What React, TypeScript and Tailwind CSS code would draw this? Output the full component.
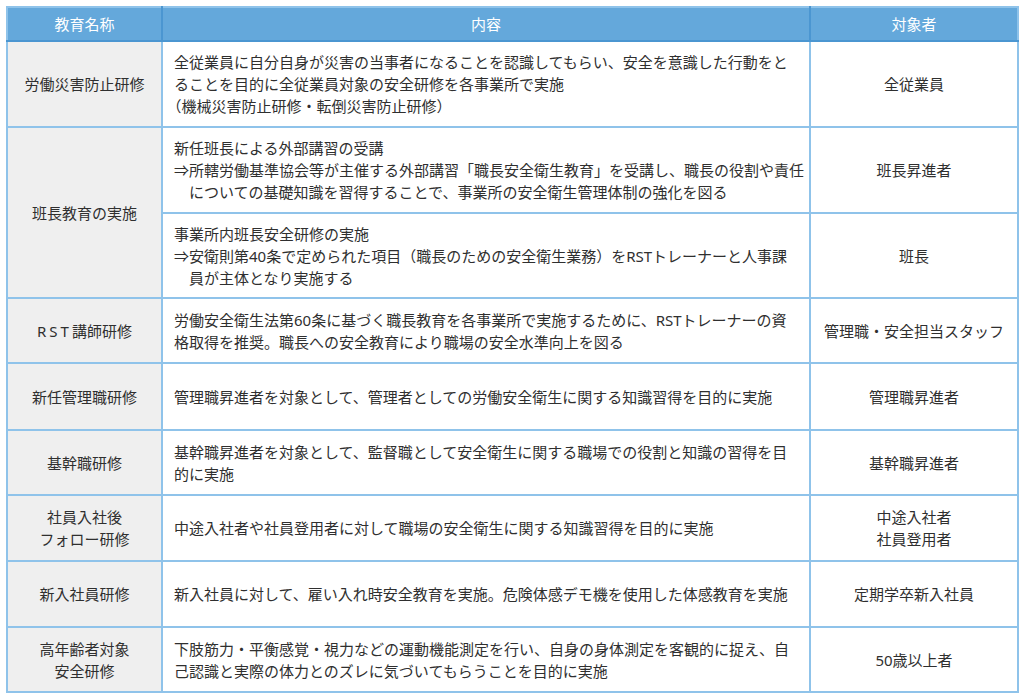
import React from "react";

const rows = [
  {
    name: ["労働災害防止研修"],
    content: [
      ["全従業員に自分自身が災害の当事者になることを認識してもらい、安全を意識した行動をと", "ることを目的に全従業員対象の安全研修を各事業所で実施"],
    ],
    target: ["全従業員"],
    h: "h-[86px]",
  },
  {
    name: ["RST講師研修"],
    content: [["労働安全衛生法第60条に基づく職長教育を各事業所で実施するために、RSTトレーナーの資", "格取得を推奨。職長への安全教育により職場の安全水準向上を図る"]],
    target: ["管理職・安全担当スタッフ"],
    h: "h-[65px]",
    spaced: true,
  },
  {
    name: ["新任管理職研修"],
    content: [["管理職昇進者を対象として、管理者としての労働安全衛生に関する知識習得を目的に実施"]],
    target: ["管理職昇進者"],
    h: "h-[67px]",
  },
  {
    name: ["基幹職研修"],
    content: [["基幹職昇進者を対象として、監督職として安全衛生に関する職場での役割と知識の習得を目", "的に実施"]],
    target: ["基幹職昇進者"],
    h: "h-[65px]",
  },
  {
    name: ["社員入社後", "フォロー研修"],
    content: [["中途入社者や社員登用者に対して職場の安全衛生に関する知識習得を目的に実施"]],
    target: ["中途入社者", "社員登用者"],
    h: "h-[66px]",
  },
  {
    name: ["新入社員研修"],
    content: [["新入社員に対して、雇い入れ時安全教育を実施。危険体感デモ機を使用した体感教育を実施"]],
    target: ["定期学卒新入社員"],
    h: "h-[66px]",
  },
  {
    name: ["高年齢者対象", "安全研修"],
    content: [["下肢筋力・平衡感覚・視力などの運動機能測定を行い、自身の身体測定を客観的に捉え、自", "己認識と実際の体力とのズレに気づいてもらうことを目的に実施"]],
    target: ["50歳以上者"],
    h: "h-[65px]",
  },
];

const cell = "border-2 border-[#8fc3ea] align-middle";
const nameCell = `${cell} bg-[#efefef] text-center`;
const contentCell = `${cell} bg-white text-left pl-[11px] pr-1`;
const targetCell = `${cell} bg-white text-center`;

const Lines = ({ lines }: { lines: string[] }) => (
  <>
    {lines.map((l, i) => (
      <div key={i} className="whitespace-nowrap">
        {l}
      </div>
    ))}
  </>
);

export default function App() {
  return (
    <div
      className="bg-white w-[1023px] h-[697px] pt-[6px] pl-[6px] text-[#2f2f2f] text-[15px] leading-[22px]"
      style={{ fontFamily: '"Noto Sans", "Noto Sans CJK JP", sans-serif' }}
    >
      <table className="border-collapse w-[1011px] table-fixed">
        <colgroup>
          <col className="w-[155px]" />
          <col className="w-[648px]" />
          <col className="w-[208px]" />
        </colgroup>
        <thead>
          <tr className="h-[34px] bg-[#64a8db] text-white">
            <th className="border-2 border-[#8fc3ea] border-r-[#4b96d1] border-b-[#4b96d1] font-normal text-[15px]">教育名称</th>
            <th className="border-2 border-[#8fc3ea] border-x-[#4b96d1] border-b-[#4b96d1] font-normal text-[15px]">内容</th>
            <th className="border-2 border-[#8fc3ea] border-l-[#4b96d1] border-b-[#4b96d1] font-normal text-[15px]">対象者</th>
          </tr>
        </thead>
        <tbody>
          <tr className={rows[0].h}>
            <td className={nameCell}><Lines lines={rows[0].name} /></td>
            <td className={contentCell}>
              <Lines lines={rows[0].content[0]} />
              <div className="whitespace-nowrap">
                <span className="[font-feature-settings:'halt']">（</span>機械災害防止研修・転倒災害防止研修）
              </div>
            </td>
            <td className={targetCell}><Lines lines={rows[0].target} /></td>
          </tr>
          <tr className="h-[86px]">
            <td rowSpan={2} className={nameCell}>班長教育の実施</td>
            <td className={contentCell}>
              <div>新任班長による外部講習の受講</div>
              <div className="pl-[1em] -indent-[1em] whitespace-nowrap">
                ⇒所轄労働基準協会等が主催する外部講習「職長安全衛生教育」を受講し、職長の役割や責任
                <br />
                についての基礎知識を習得することで、事業所の安全衛生管理体制の強化を図る
              </div>
            </td>
            <td className={targetCell}>班長昇進者</td>
          </tr>
          <tr className="h-[85px]">
            <td className={contentCell}>
              <div>事業所内班長安全研修の実施</div>
              <div className="pl-[1em] -indent-[1em] whitespace-nowrap">
                ⇒安衛則第40条で定められた項目（職長のための安全衛生業務）をRSTトレーナーと人事課
                <br />
                員が主体となり実施する
              </div>
            </td>
            <td className={targetCell}>班長</td>
          </tr>
          {rows.slice(1).map((r, i) => (
            <tr key={i} className={r.h}>
              <td className={nameCell}>
                {r.spaced ? <span className="tracking-[0.2em]">RST</span> : null}
                {r.spaced ? "講師研修" : <Lines lines={r.name} />}
              </td>
              <td className={contentCell}><Lines lines={r.content[0]} /></td>
              <td className={targetCell}><Lines lines={r.target} /></td>
            </tr>
          ))}
        </tbody>
      </table>
    </div>
  );
}
